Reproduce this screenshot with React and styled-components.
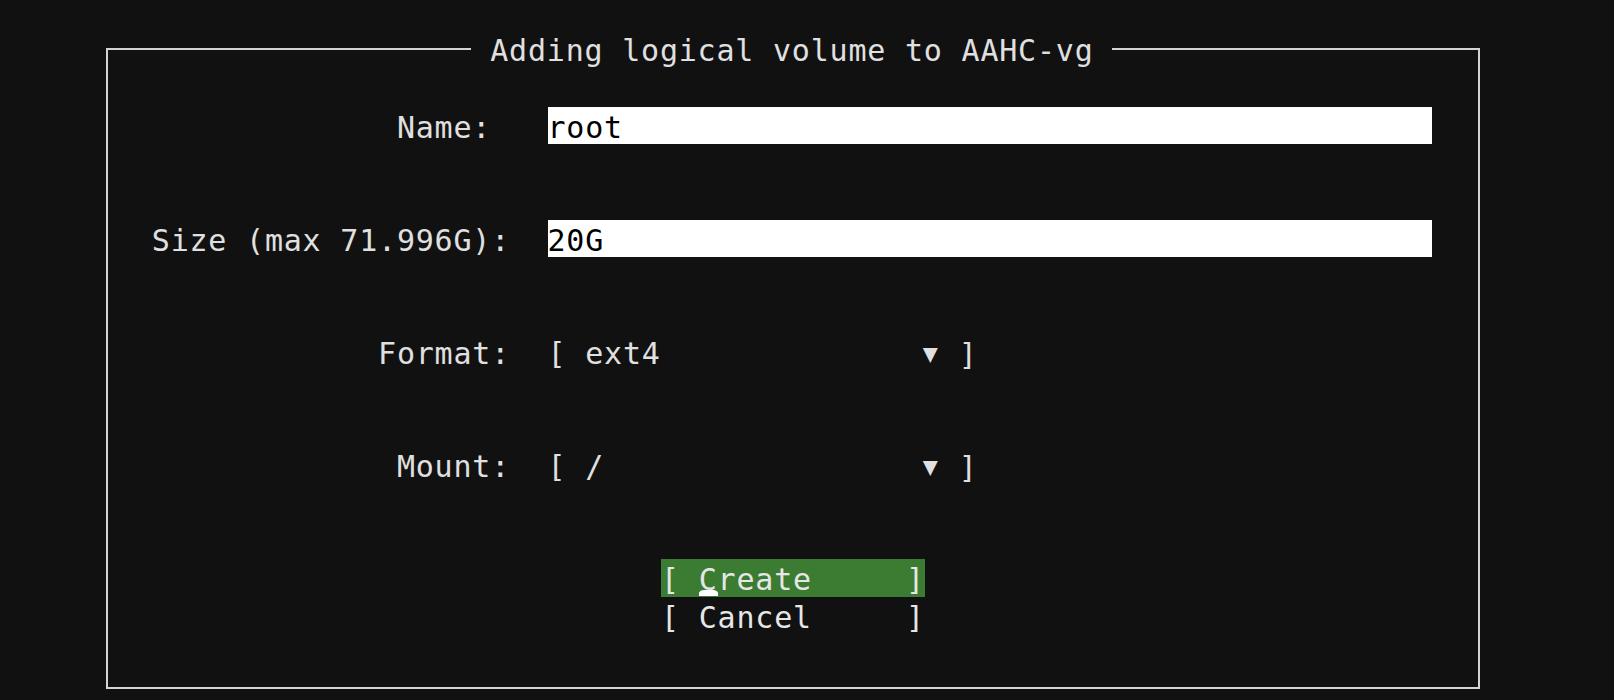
import React from 'react';
import styled, { createGlobalStyle, css } from 'styled-components';

const GlobalStyle = createGlobalStyle`
  html, body {
    margin: 0;
    background: #111111;
  }
  body {
    font-family: "DejaVu Sans Mono", "Liberation Mono", monospace;
    font-size: 30px;
    letter-spacing: 0.79px;
    color: #e0e0e0;
  }
`;

// one terminal text row: 37.7px tall, baseline sits low like the console font
const cell = css`
  box-sizing: border-box;
  height: 37.7px;
  padding-top: 5px;
  line-height: 32.7px;
  white-space: pre;
`;

const Screen = styled.div`
  height: 700px;
  box-sizing: border-box;
  padding: 30.45px 134px 0 106px;
  overflow: hidden;
`;

const Frame = styled.fieldset`
  margin: 0;
  padding: 0;
  min-width: 0;
  height: 658.5px;
  box-sizing: border-box;
  border: 2px solid #d4d4d4;
`;

const Title = styled.legend`
  ${cell}
  margin-left: 363.4px;
  padding: 5px 0 0 0;
`;

const Form = styled.div`
  display: grid;
  grid-template-columns: 402px 884px;
  column-gap: 37.5px;
  row-gap: 75.4px;
  padding-top: 38.55px;
`;

const Label = styled.div`
  ${cell}
  text-align: right;
`;

const TextField = styled.input`
  ${cell}
  display: block;
  width: 100%;
  margin: 0;
  border: none;
  outline: none;
  padding-left: 0;
  padding-right: 0;
  background: #ffffff;
  color: #000000;
  font: inherit;
  letter-spacing: inherit;
`;

const Select = styled.div`
  ${cell}
  display: flex;
  justify-content: space-between;
  width: 430px;
`;

const Caret = styled.span`
  display: inline-block;
  width: 18.85px;
  text-align: center;
  font-size: 25px;
  letter-spacing: 0;
  vertical-align: 3px;
`;

const Buttons = styled.div`
  display: flex;
  flex-direction: column;
  align-items: center;
  margin-top: 75.4px;
`;

const Button = styled.div`
  ${cell}
  background: ${(p) => (p.$focused ? '#3b7c32' : 'transparent')};
  color: #e6e6e6;
`;

const Cursor = styled.span`
  display: inline-block;
  position: relative;

  &::after {
    content: '';
    position: absolute;
    left: 0;
    right: 0;
    bottom: 1px;
    height: 6px;
    background: #ffffff;
    border-radius: 5px 5px 0 0 / 3px 3px 0 0;
  }
`;

const fields = [
  { label: 'Name: ', value: 'root' },
  { label: 'Size (max 71.996G):', value: '20G' },
];

const selects = [
  { label: 'Format:', value: 'ext4' },
  { label: 'Mount:', value: '/' },
];

export default function App() {
  return (
    <>
      <GlobalStyle />
      <Screen>
        <Frame>
          <Title> Adding logical volume to AAHC-vg </Title>
          <Form>
            {fields.map((f) => (
              <React.Fragment key={f.label}>
                <Label>{f.label}</Label>
                <TextField defaultValue={f.value} readOnly spellCheck={false} />
              </React.Fragment>
            ))}
            {selects.map((s) => (
              <React.Fragment key={s.label}>
                <Label>{s.label}</Label>
                <div>
                  <Select>
                    <span>[ {s.value}</span>
                    <span>
                      <Caret>▼</Caret> ]
                    </span>
                  </Select>
                </div>
              </React.Fragment>
            ))}
          </Form>
          <Buttons>
            <Button $focused>
              [ <Cursor>C</Cursor>reate     ]
            </Button>
            <Button>[ Cancel     ]</Button>
          </Buttons>
        </Frame>
      </Screen>
    </>
  );
}
